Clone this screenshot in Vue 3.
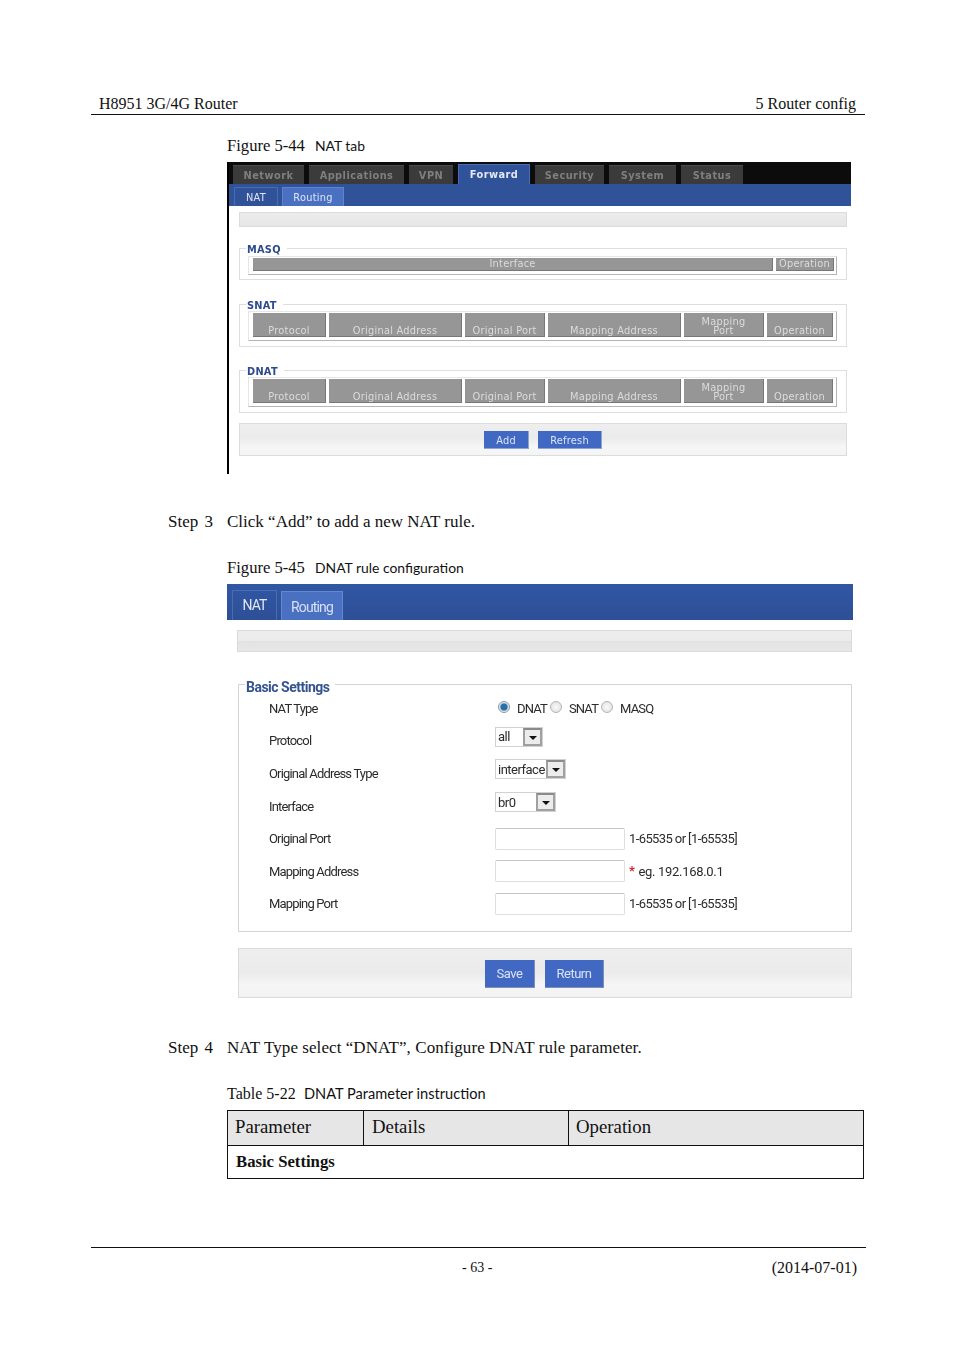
<script setup>
const mainTabs = ['Network', 'Applications', 'VPN', 'Forward', 'Security', 'System', 'Status']
const natCols = [['Protocol'], ['Original Address'], ['Original Port'], ['Mapping Address'], ['Mapping', 'Port'], ['Operation']]
const rows = [
  { label: 'NAT Type', kind: 'radio' },
  { label: 'Protocol', kind: 'select', value: 'all', cls: 'sel-all' },
  { label: 'Original Address Type', kind: 'select', value: 'interface', cls: 'sel-if' },
  { label: 'Interface', kind: 'select', value: 'br0', cls: 'sel-br' },
  { label: 'Original Port', kind: 'input', hint: '1-65535 or [1-65535]' },
  { label: 'Mapping Address', kind: 'input', star: true, hint: 'eg. 192.168.0.1' },
  { label: 'Mapping Port', kind: 'input', hint: '1-65535 or [1-65535]' }
]
const radios = [
  { name: 'DNAT', on: true },
  { name: 'SNAT', on: false },
  { name: 'MASQ', on: false }
]
</script>

<template>
  <div class="page">
    <header class="head">
      <span>H8951 3G/4G Router</span>
      <span>5 Router config</span>
    </header>

    <p class="caption cap-1"><span class="cap-no">Figure 5-44</span><span class="cap-txt">NAT tab</span></p>

    <section class="shot1">
      <div class="tabs">
        <div v-for="t in mainTabs" :key="t" class="tab" :class="{ 'tab-on': t === 'Forward' }"><span>{{ t }}</span></div>
      </div>
      <div class="bar1">
        <div class="sub sub-nat">NAT</div>
        <div class="sub sub-routing">Routing</div>
      </div>
      <div class="body1">
        <div class="tool1"></div>

        <div class="fs1 fs-masq">
          <div class="leg1">MASQ</div>
          <div class="ti ti-masq">
            <div class="th">Interface</div>
            <div class="th">Operation</div>
          </div>
        </div>

        <div class="fs1 fs-snat">
          <div class="leg1">SNAT</div>
          <div class="ti ti-nat">
            <div v-for="c in natCols" :key="c[0]" class="th th-tall"><span v-for="l in c" :key="l">{{ l }}</span></div>
          </div>
        </div>

        <div class="fs1 fs-dnat">
          <div class="leg1">DNAT</div>
          <div class="ti ti-nat">
            <div v-for="c in natCols" :key="c[0]" class="th th-tall"><span v-for="l in c" :key="l">{{ l }}</span></div>
          </div>
        </div>

        <div class="foot1">
          <div class="btn1 btn-add">Add</div>
          <div class="btn1 btn-refresh">Refresh</div>
        </div>
      </div>
    </section>

    <p class="step step-3"><span class="step-no">Step 3</span><span>Click “Add” to add a new NAT rule.</span></p>

    <p class="caption cap-2"><span class="cap-no">Figure 5-45</span><span class="cap-txt">DNAT rule configuration</span></p>

    <section class="shot2">
      <div class="bar2">
        <div class="sub2 sub2-nat">NAT</div>
        <div class="sub2 sub2-routing">Routing</div>
      </div>
      <div class="tool2"></div>
      <div class="fs2">
        <div class="leg2">Basic Settings</div>
        <div v-for="r in rows" :key="r.label" class="row">
          <div class="lbl">{{ r.label }}</div>
          <div class="ctl">
            <template v-if="r.kind === 'radio'">
              <span v-for="o in radios" :key="o.name" class="radio-item">
                <span class="radio" :class="{ 'radio-on': o.on }"></span>
                <span>{{ o.name }}</span>
              </span>
            </template>
            <div v-else-if="r.kind === 'select'" class="sel" :class="r.cls">
              <span>{{ r.value }}</span>
              <span class="arrow"><i></i></span>
            </div>
            <template v-else>
              <div class="inp"></div>
              <span v-if="r.star" class="star">*</span>
              <span class="hint">{{ r.hint }}</span>
            </template>
          </div>
        </div>
      </div>
      <div class="foot2">
        <div class="btn2 btn-save">Save</div>
        <div class="btn2 btn-return">Return</div>
      </div>
    </section>

    <p class="step step-4"><span class="step-no">Step 4</span><span>NAT Type select “DNAT”, Configure DNAT rule parameter.</span></p>

    <p class="caption cap-3"><span class="cap-no-t">Table 5-22</span><span class="cap-txt-t">DNAT Parameter instruction</span></p>

    <table class="doc">
      <thead>
        <tr>
          <th class="c1">Parameter</th>
          <th class="c2">Details</th>
          <th class="c3">Operation</th>
        </tr>
      </thead>
      <tbody>
        <tr>
          <td colspan="3">Basic Settings</td>
        </tr>
      </tbody>
    </table>

    <footer class="foot">
      <span class="pageno">- 63 -</span>
      <span>(2014-07-01)</span>
    </footer>
  </div>
</template>

<style>
html, body { margin: 0; background: #fff; }
</style>

<style scoped>
.page {
  width: 954px;
  height: 1350px;
  overflow: hidden;
  background: #fff;
  color: #111;
  font-family: "Liberation Serif", serif;
  font-size: 16px;
}
p { margin: 0; }

.head {
  box-sizing: border-box;
  width: 774px;
  height: 115px;
  margin-left: 91px;
  padding: 0 9px 1px 8px;
  display: flex;
  justify-content: space-between;
  align-items: flex-end;
  border-bottom: 1px solid #111;
  font-size: 16px;
  line-height: 18px;
}

.caption {
  height: 20px;
  line-height: 20px;
  margin-left: 227px;
  display: flex;
  font-size: 16.6px;
  white-space: nowrap;
}
.cap-1 { margin-top: 21px; }
.cap-2 { margin-top: 26px; }
.cap-3 { margin-top: 26px; font-size: 16px; }
.cap-no { width: 88px; }
.cap-no-t { width: 77px; }
.cap-txt { font-family: Lato, sans-serif; font-size: 13.9px; }
.cap-txt-t { font-family: Lato, sans-serif; font-size: 14.6px; }

.step {
  height: 20px;
  line-height: 20px;
  margin-left: 168px;
  display: flex;
  font-size: 17px;
  white-space: nowrap;
}
.step-3 { margin-top: 38px; }
.step-4 { margin-top: 40px; letter-spacing: 0.07px; }
.step-no { width: 59px; word-spacing: 2px; letter-spacing: 0; }

/* Figure 5-44 */
.shot1 {
  box-sizing: border-box;
  width: 624px;
  height: 312px;
  margin: 6px 0 0 227px;
  border-left: 2px solid #000;
  font-family: "DejaVu Sans", sans-serif;
  font-size: 9.8px;
  letter-spacing: 0.25px;
  filter: blur(0.35px);
}
.tabs {
  height: 22px;
  box-sizing: border-box;
  padding-left: 4px;
  background: #0c0c0c;
  display: grid;
  grid-template-columns: 76px 100px 49px 77px 74px 72px 67px;
  align-items: end;
}
.tab {
  height: 19px;
  margin-right: 5px;
  background: #3b3b3b;
  border-top: 1px solid #4b4b4b;
  box-sizing: border-box;
  color: #7f7f7f;
  font-weight: 700;
  letter-spacing: 0.45px;
  display: flex;
  align-items: center;
  justify-content: center;
}
.tab-on {
  height: 20px;
  background: #2f5299;
  border: 1px solid #4a6cb4;
  border-bottom: 0;
  color: #e4e8f2;
}
.bar1 {
  height: 22px;
  background: #2f5299;
  padding-left: 5px;
  display: flex;
  align-items: flex-end;
  gap: 4px;
}
.sub {
  box-sizing: border-box;
  height: 19px;
  display: flex;
  align-items: center;
  justify-content: center;
  color: #dfe5f2;
}
.sub-nat { width: 44px; border: 1px solid #4a6cb4; border-bottom: 0; }
.sub-routing { width: 62px; background: #4a70c2; border: 1px solid #5f83cf; border-bottom: 0; }

.body1 { padding: 6px 4px 0 10px; }
.tool1 {
  height: 15px;
  box-sizing: border-box;
  border: 1px solid #dcdcdc;
  background: linear-gradient(#ececec, #e6e6e6);
}
.fs1 {
  position: relative;
  box-sizing: border-box;
  border: 1px solid #dedede;
  background: #fff;
  padding: 6px 9px 0 8px;
}
.fs-masq { margin-top: 21px; height: 32px; }
.fs-snat { margin-top: 24px; height: 43px; }
.fs-dnat { margin-top: 23px; height: 43px; }
.leg1 {
  position: absolute;
  left: 6px;
  top: -4px;
  padding: 0 6px 0 1px;
  background: #fff;
  color: #2c4a8c;
  font-weight: 700;
  line-height: 10px;
}
.ti {
  position: relative;
  display: grid;
  column-gap: 3px;
  padding: 1px 3px 3px 4px;
  border: 1px solid #e6e6e6;
  border-right-color: #b5b5b5;
  border-bottom-color: #b5b5b5;
}
.ti-masq { grid-template-columns: 520px 58px; padding-top: 1px; margin-top: 1px; }
.ti-nat { grid-template-columns: 73px 133px 80px 133px 80px 66px; }
.th {
  height: 13px;
  box-sizing: border-box;
  background: #969696;
  border-right: 1px solid #777;
  border-bottom: 1px solid #777;
  color: #dcdcdc;
  display: flex;
  align-items: center;
  justify-content: center;
  line-height: 10px;
  white-space: nowrap;
}
.th-tall {
  height: 24px;
  flex-direction: column;
  justify-content: flex-end;
  line-height: 9px;
  padding-bottom: 1px;
}
.foot1 {
  height: 33px;
  margin-top: 10px;
  box-sizing: border-box;
  border: 1px solid #dcdcdc;
  background: linear-gradient(#eeeeee 0%, #ebebeb 45%, #f6f6f6 75%, #f4f4f4 100%);
  padding: 7px 0 0 244px;
  display: flex;
  gap: 9px;
}
.btn1 {
  height: 18px;
  box-sizing: border-box;
  padding-top: 1px;
  background: #4169c3;
  border-right: 1px solid #8ea4d0;
  border-bottom: 1px solid #8ea4d0;
  color: #dde4f3;
  display: flex;
  align-items: center;
  justify-content: center;
}
.btn-add { width: 45px; }
.btn-refresh { width: 64px; }

/* Figure 5-45 */
.shot2 {
  width: 626px;
  height: 414px;
  margin: 6px 0 0 227px;
  font-family: Roboto, sans-serif;
  font-size: 13px;
  letter-spacing: -0.5px;
  color: #2b2b2b;
  filter: blur(0.45px);
}
.bar2 {
  height: 36px;
  background: linear-gradient(#3157a4, #2d4f96);
  padding-left: 5px;
  display: flex;
  align-items: flex-end;
  gap: 4px;
}
.sub2 {
  box-sizing: border-box;
  display: flex;
  align-items: center;
  justify-content: center;
  color: #e2e7f3;
  font-size: 14px;
  letter-spacing: -0.85px;
}
.sub2-nat { width: 45px; height: 30px; padding-bottom: 2px; border: 1px solid #4a6cb4; border-bottom: 0; }
.sub2-routing { width: 62px; height: 29px; padding-top: 1px; background: #4a70c2; border: 1px solid #6487d0; border-bottom: 0; color: #d7e0f3; }
.tool2 {
  box-sizing: border-box;
  height: 22px;
  margin: 10px 1px 0 10px;
  border: 1px solid #dadada;
  background: linear-gradient(#eeeeee 0%, #ebebeb 50%, #e2e2e2 52%, #e8e8e8 100%);
}
.fs2 {
  position: relative;
  box-sizing: border-box;
  height: 248px;
  margin: 32px 1px 0 11px;
  padding: 7px 0 0 30px;
  border: 1px solid #d4d4d4;
  display: grid;
  grid-auto-rows: 32.6px;
}
.leg2 {
  position: absolute;
  left: 6px;
  top: -6px;
  padding: 0 5px 0 1px;
  background: #fff;
  color: #34548f;
  font-weight: 700;
  font-size: 14px;
  line-height: 16px;
}
.row {
  display: grid;
  grid-template-columns: 226px 1fr;
  align-items: center;
}
.lbl { letter-spacing: -0.82px; }
.ctl {
  display: flex;
  align-items: center;
}
.radio-item {
  display: inline-flex;
  align-items: center;
  gap: 7px;
  letter-spacing: -0.85px;
}
.radio-item:first-child { padding-left: 3px; margin-right: 3px; }
.radio-item:nth-child(2) { margin-right: 3px; }
.radio {
  box-sizing: border-box;
  width: 12px;
  height: 12px;
  margin-top: -3px;
  border-radius: 50%;
  border: 1px solid #b4b4b4;
  background: radial-gradient(circle at 50% 50%, #fafafa, #dcdcdc);
}
.radio-on {
  background: radial-gradient(circle at 50% 50%, #2a6fa8 0 3px, #7fa8c8 3.6px, #e6ecf0 4.6px);
  border-color: #8a96a1;
}
.sel {
  box-sizing: border-box;
  height: 20px;
  margin-bottom: 8px;
  border: 1px solid #d2d2d2;
  display: flex;
  align-items: center;
  justify-content: space-between;
  padding-left: 2px;
}
.sel-all { width: 48px; }
.sel-if { width: 71px; }
.sel-br { width: 61px; }
.arrow {
  box-sizing: border-box;
  width: 19px;
  height: 18px;
  border: 2px solid #a0a0a0;
  border-top-color: #8a8a8a;
  background: #ececec;
  display: flex;
  align-items: center;
  justify-content: center;
}
.arrow i {
  display: block;
  width: 0;
  height: 0;
  margin-top: 2px;
  border-left: 4px solid transparent;
  border-right: 4px solid transparent;
  border-top: 4px solid #111;
}
.inp {
  box-sizing: border-box;
  width: 130px;
  height: 22px;
  border: 1px solid #dedede;
  border-top-color: #c4c4c4;
  border-radius: 2px;
  background: #fff;
}
.hint { margin-left: 4px; letter-spacing: -0.6px; }
.star {
  margin-left: 4px;
  color: #d8202c;
  font-weight: 700;
  line-height: 10px;
}
.star + .hint { margin-left: 4px; letter-spacing: -0.3px; }
.foot2 {
  box-sizing: border-box;
  height: 50px;
  margin: 16px 1px 0 11px;
  border: 1px solid #dadada;
  background: linear-gradient(#eeeeee 0%, #ebebeb 50%, #f6f6f6 75%, #f2f2f2 100%);
  padding: 11px 0 0 246px;
  display: flex;
  gap: 10px;
}
.btn2 {
  box-sizing: border-box;
  height: 28px;
  background: #4169c3;
  border-right: 1px solid #7e8fb0;
  border-bottom: 1px solid #7e8fb0;
  color: #dbe3f4;
  display: flex;
  align-items: center;
  justify-content: center;
}
.btn-save { width: 50px; }
.btn-return { width: 59px; }

/* Table 5-22 */
.doc {
  box-sizing: border-box;
  width: 637px;
  margin: 6px 0 0 227px;
  border-collapse: collapse;
  table-layout: fixed;
  font-size: 18.8px;
  color: #111;
}
.doc th,
.doc td {
  box-sizing: border-box;
  border: 1px solid #111;
  padding: 0 8px 2px;
  text-align: left;
}
.doc th {
  height: 35px;
  background: #e6e6e6;
  font-weight: 400;
}
.doc .c1, .doc .c3 { padding-left: 7px; }
.doc td {
  height: 33px;
  padding-bottom: 0;
  font-size: 16.7px;
  font-weight: 700;
}
.c1 { width: 136px; }
.c2 { width: 205px; }

.foot {
  box-sizing: border-box;
  position: relative;
  width: 775px;
  margin: 68px 0 0 91px;
  height: 30px;
  padding: 11px 9px 0 0;
  border-top: 1px solid #111;
  display: flex;
  justify-content: flex-end;
  font-size: 16px;
  line-height: 18px;
}
.pageno {
  position: absolute;
  left: 371px;
  top: 11px;
  font-size: 14px;
}
</style>
